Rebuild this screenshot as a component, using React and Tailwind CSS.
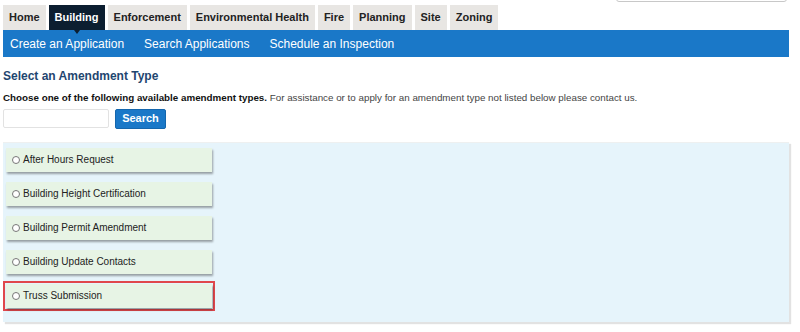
import React from 'react';

const tabs = ['Home', 'Building', 'Enforcement', 'Environmental Health', 'Fire', 'Planning', 'Site', 'Zoning'];
const subLinks = ['Create an Application', 'Search Applications', 'Schedule an Inspection'];
const amendments = [
  'After Hours Request',
  'Building Height Certification',
  'Building Permit Amendment',
  'Building Update Contacts',
  'Truss Submission',
];

const AmendmentItem = ({ label, highlighted }) => {
  const card = (
    <label className="flex items-center gap-[3px] w-[206px] h-[24px] pl-[6px] bg-[#e7f4e5] text-[10px] text-[#222] shadow-[1px_2px_2px_rgba(0,0,0,0.35)] cursor-pointer">
      <span className="w-[8px] h-[8px] rounded-full border border-[#777] bg-white shrink-0" />
      <span>{label}</span>
    </label>
  );
  if (highlighted) {
    return <div className="w-[212px] p-[1px] border-2 border-[#e0474c] -mt-[3px] -ml-[3px]">{card}</div>;
  }
  return card;
};

const App = () => {
  return (
    <div className="w-[800px] h-[332px] bg-white relative overflow-hidden font-['Liberation_Sans',Arial,sans-serif]">
      {/* cut-off search box top right */}
      <div className="absolute right-[13px] -top-[10px] w-[171px] h-[12px] border border-[#c8c8c8] rounded-[3px] bg-white" />

      <div className="pt-[5px] pl-[3px] pr-[11px]">
        {/* main tabs */}
        <div className="flex gap-[3px] h-[25px]">
          {tabs.map((t) => (
            <div
              key={t}
              className={`relative flex items-center px-[6px] text-[11px] font-bold ${
                t === 'Building' ? 'bg-[#0c1e30] text-white' : 'bg-[#e8e6e3] text-[#222]'
              }`}
            >
              {t}
              {t === 'Building' && (
                <span className="absolute left-1/2 -bottom-[4px] -translate-x-1/2 w-0 h-0 border-l-[3px] border-r-[3px] border-t-[4px] border-l-transparent border-r-transparent border-t-[#0c1e30] z-10" />
              )}
            </div>
          ))}
        </div>

        {/* sub nav */}
        <div className="flex items-center gap-[20px] h-[27px] bg-[#1a78c8] pl-[7px] text-[12px] text-white">
          {subLinks.map((s) => (
            <span key={s}>{s}</span>
          ))}
        </div>

        <h2 className="mt-[10px] text-[12px] font-bold text-[#1f4670]">Select an Amendment Type</h2>
        <p className="mt-[6px] text-[9.8px] text-[#444]">
          <span className="font-bold text-[#111]">Choose one of the following available amendment types.</span> For
          assistance or to apply for an amendment type not listed below please contact us.
        </p>

        <div className="flex items-center gap-[6px] mt-[3px]">
          <input className="w-[106px] h-[19px] border border-[#e2e2e2] rounded-[2px] outline-none" />
          <button className="w-[51px] h-[20px] bg-[#1a78c8] text-white text-[11px] font-bold rounded-[2px] border border-[#1466ad]">
            Search
          </button>
        </div>

        <div className="mt-[13px] h-[180px] bg-[#e6f4fb] border-t border-[#eef0f0] shadow-[2px_2px_1px_#e2e2e2] pt-[5px] pl-[3px] flex flex-col gap-[10px]">
          {amendments.map((a, i) => (
            <AmendmentItem key={a} label={a} highlighted={i === amendments.length - 1} />
          ))}
        </div>
      </div>
    </div>
  );
};

export default App;
